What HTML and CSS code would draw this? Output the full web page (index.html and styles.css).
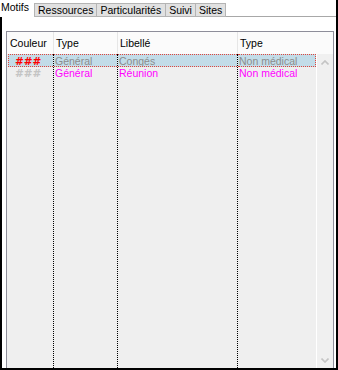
FILE: index.html
```html
<!DOCTYPE html>
<html lang="fr">
<head>
    <meta charset="UTF-8">
    <title>Motifs</title>
    <link rel="stylesheet" href="styles.css">
</head>
<body>
    <div class="window">
        <div class="tabs">
            <div class="tab active">Motifs</div>
            <div class="tab">Ressources</div>
            <div class="tab wide">Particularités</div>
            <div class="tab">Suivi</div>
            <div class="tab">Sites</div>
            <div class="tab-fill"></div>
        </div>

        <div class="page">
            <div class="panel">
                <div class="grid-head">
                    <div class="hcell">Couleur</div>
                    <div class="hcell">Type</div>
                    <div class="hcell">Libellé</div>
                    <div class="hcell">Type</div>
                </div>
                <div class="grid-body">
                    <div class="list">
                        <div class="col col-color">
                            <div class="cell sel first hash red">###</div>
                            <div class="cell hash silver">###</div>
                        </div>
                        <div class="col">
                            <div class="cell sel grey">Général</div>
                            <div class="cell pink">Général</div>
                        </div>
                        <div class="col">
                            <div class="cell sel grey">Congés</div>
                            <div class="cell pink">Réunion</div>
                        </div>
                        <div class="col">
                            <div class="cell sel last grey">Non médical</div>
                            <div class="cell pink">Non médical</div>
                        </div>
                    </div>
                    <div class="scroll">
                        <svg width="8" height="5" viewBox="0 0 8 5"><path d="M0.5 4.5 L4 1 L7.5 4.5" fill="none" stroke="#c4c4c4" stroke-width="1.6"/></svg>
                        <svg width="8" height="5" viewBox="0 0 8 5"><path d="M0.5 0.5 L4 4 L7.5 0.5" fill="none" stroke="#c4c4c4" stroke-width="1.6"/></svg>
                    </div>
                </div>
            </div>
        </div>
    </div>
</body>
</html>
```

FILE: styles.css
```css
body {
    margin: 0;
    background: #ffffff;
    font-family: "Liberation Sans", Arial, sans-serif;
    font-size: 10.5px;
    color: #000000;
}

.window {
    width: 338px;
    height: 370px;
    box-sizing: border-box;
    border-right: 2px solid #000000;
    border-bottom: 2px solid #000000;
    display: flex;
    flex-direction: column;
}

/* tab strip */
.tabs {
    display: flex;
    height: 17px;
}

.tab {
    margin-top: 3px;
    padding: 0 3px;
    line-height: 12px;
    background: #e1e1e1;
    border: 1px solid #b4b4b4;
    margin-left: -1px;
}

.tab.wide {
    padding: 0 4px 0 3px;
}

.tab.active {
    margin: 0;
    padding: 0 6px 0 1px;
    background: #ffffff;
    border: none;
    line-height: 14px;
}

.tab-fill {
    flex: 1;
    border-bottom: 1px solid #a8a8a8;
}

.page {
    flex: 1;
    display: flex;
    border-left: 2px solid #000000;
    padding: 14px 2px 0 4px;
}

.panel {
    flex: 1;
    display: flex;
    flex-direction: column;
    border: 1px solid #8e8e9a;
    border-bottom: none;
}

.grid-head {
    display: grid;
    grid-template-columns: 46px 64px 120px 1fr;
    height: 22px;
    line-height: 22px;
    background: #fbfbfb;
}

.hcell {
    padding-left: 2px;
    border-left: 1px solid #e6e6e6;
}

.hcell:first-child {
    padding-left: 3px;
    border-left: none;
}

.grid-body {
    flex: 1;
    display: flex;
}

.list {
    flex: 1;
    display: grid;
    grid-template-columns: 45px 64px 120px 1fr;
    padding-left: 1px;
    background: #efefef;
}

.col {
    border-left: 1px dotted #000000;
}

.col-color {
    border-left: none;
}

.cell {
    height: 13px;
    line-height: 13px;
    padding-left: 1px;
    white-space: nowrap;
    overflow: hidden;
}

.cell.sel {
    height: 11px;
    line-height: 12px;
    background: #c2dce8;
    border-top: 1px dotted #e0463c;
    border-bottom: 1px dotted #e0463c;
}

.cell.sel.first {
    border-left: 1px dotted #e0463c;
}

.cell.sel.last {
    border-right: 1px dotted #e0463c;
}

.hash {
    padding-left: 7px;
    font-family: "DejaVu Sans", sans-serif;
    font-weight: bold;
}

.cell.sel.first.hash {
    padding-left: 6px;
}

.red { color: #ff0000; }
.silver { color: #c4c4c4; }
.grey { color: #8c8c8c; }
.pink { color: #ff00ff; }

.scroll {
    width: 16px;
    border-left: 1px solid #ffffff;
    background: #f0f0f0;
    display: flex;
    flex-direction: column;
    justify-content: space-between;
    align-items: center;
    padding: 6px 0 5px;
}
```
